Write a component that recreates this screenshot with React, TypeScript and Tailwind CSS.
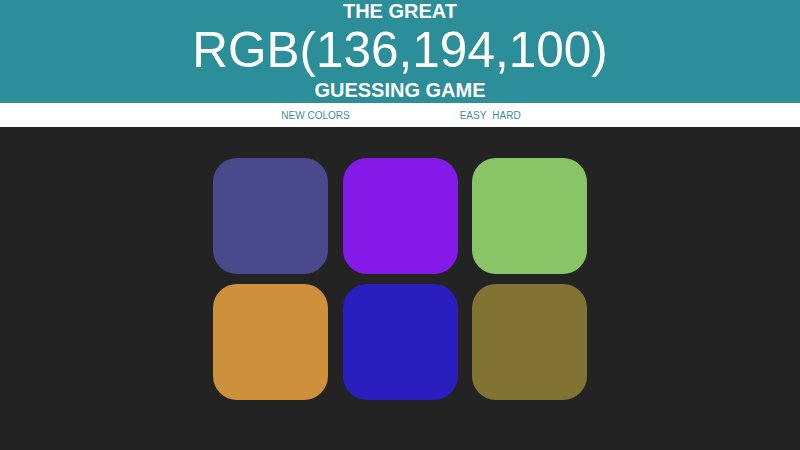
const squares = ["#4a498b", "#8519e8", "#89c466", "#cd913b", "#2a1fbe", "#807334"];

export default function App() {
  return (
    <div className="min-h-[450px] bg-[#232323] font-['Liberation_Sans',Arial,sans-serif]">
      <h1 className="bg-[#2c8e99] text-center text-white">
        <div className="text-[20px] leading-[22px] font-bold">THE GREAT</div>
        <div className="text-[49.5px] leading-[56px]">RGB(136,194,100)</div>
        <div className="text-[20px] leading-[25px] font-bold">GUESSING GAME</div>
      </h1>
      <div className="flex h-[24px] items-center justify-center bg-white pl-[2px] text-[10px] text-[#3d8f99]">
        <button>NEW COLORS</button>
        <span className="w-[110px]"></span>
        <button>EASY</button>
        <button className="ml-[6px]">HARD</button>
      </div>
      <div className="mx-auto grid w-fit grid-cols-3 gap-x-[14.5px] gap-y-[10px] pt-[31px]">
        {squares.map((c) => (
          <div key={c} className="h-[116px] w-[115px] rounded-[24px]" style={{ backgroundColor: c }} />
        ))}
      </div>
    </div>
  );
}
